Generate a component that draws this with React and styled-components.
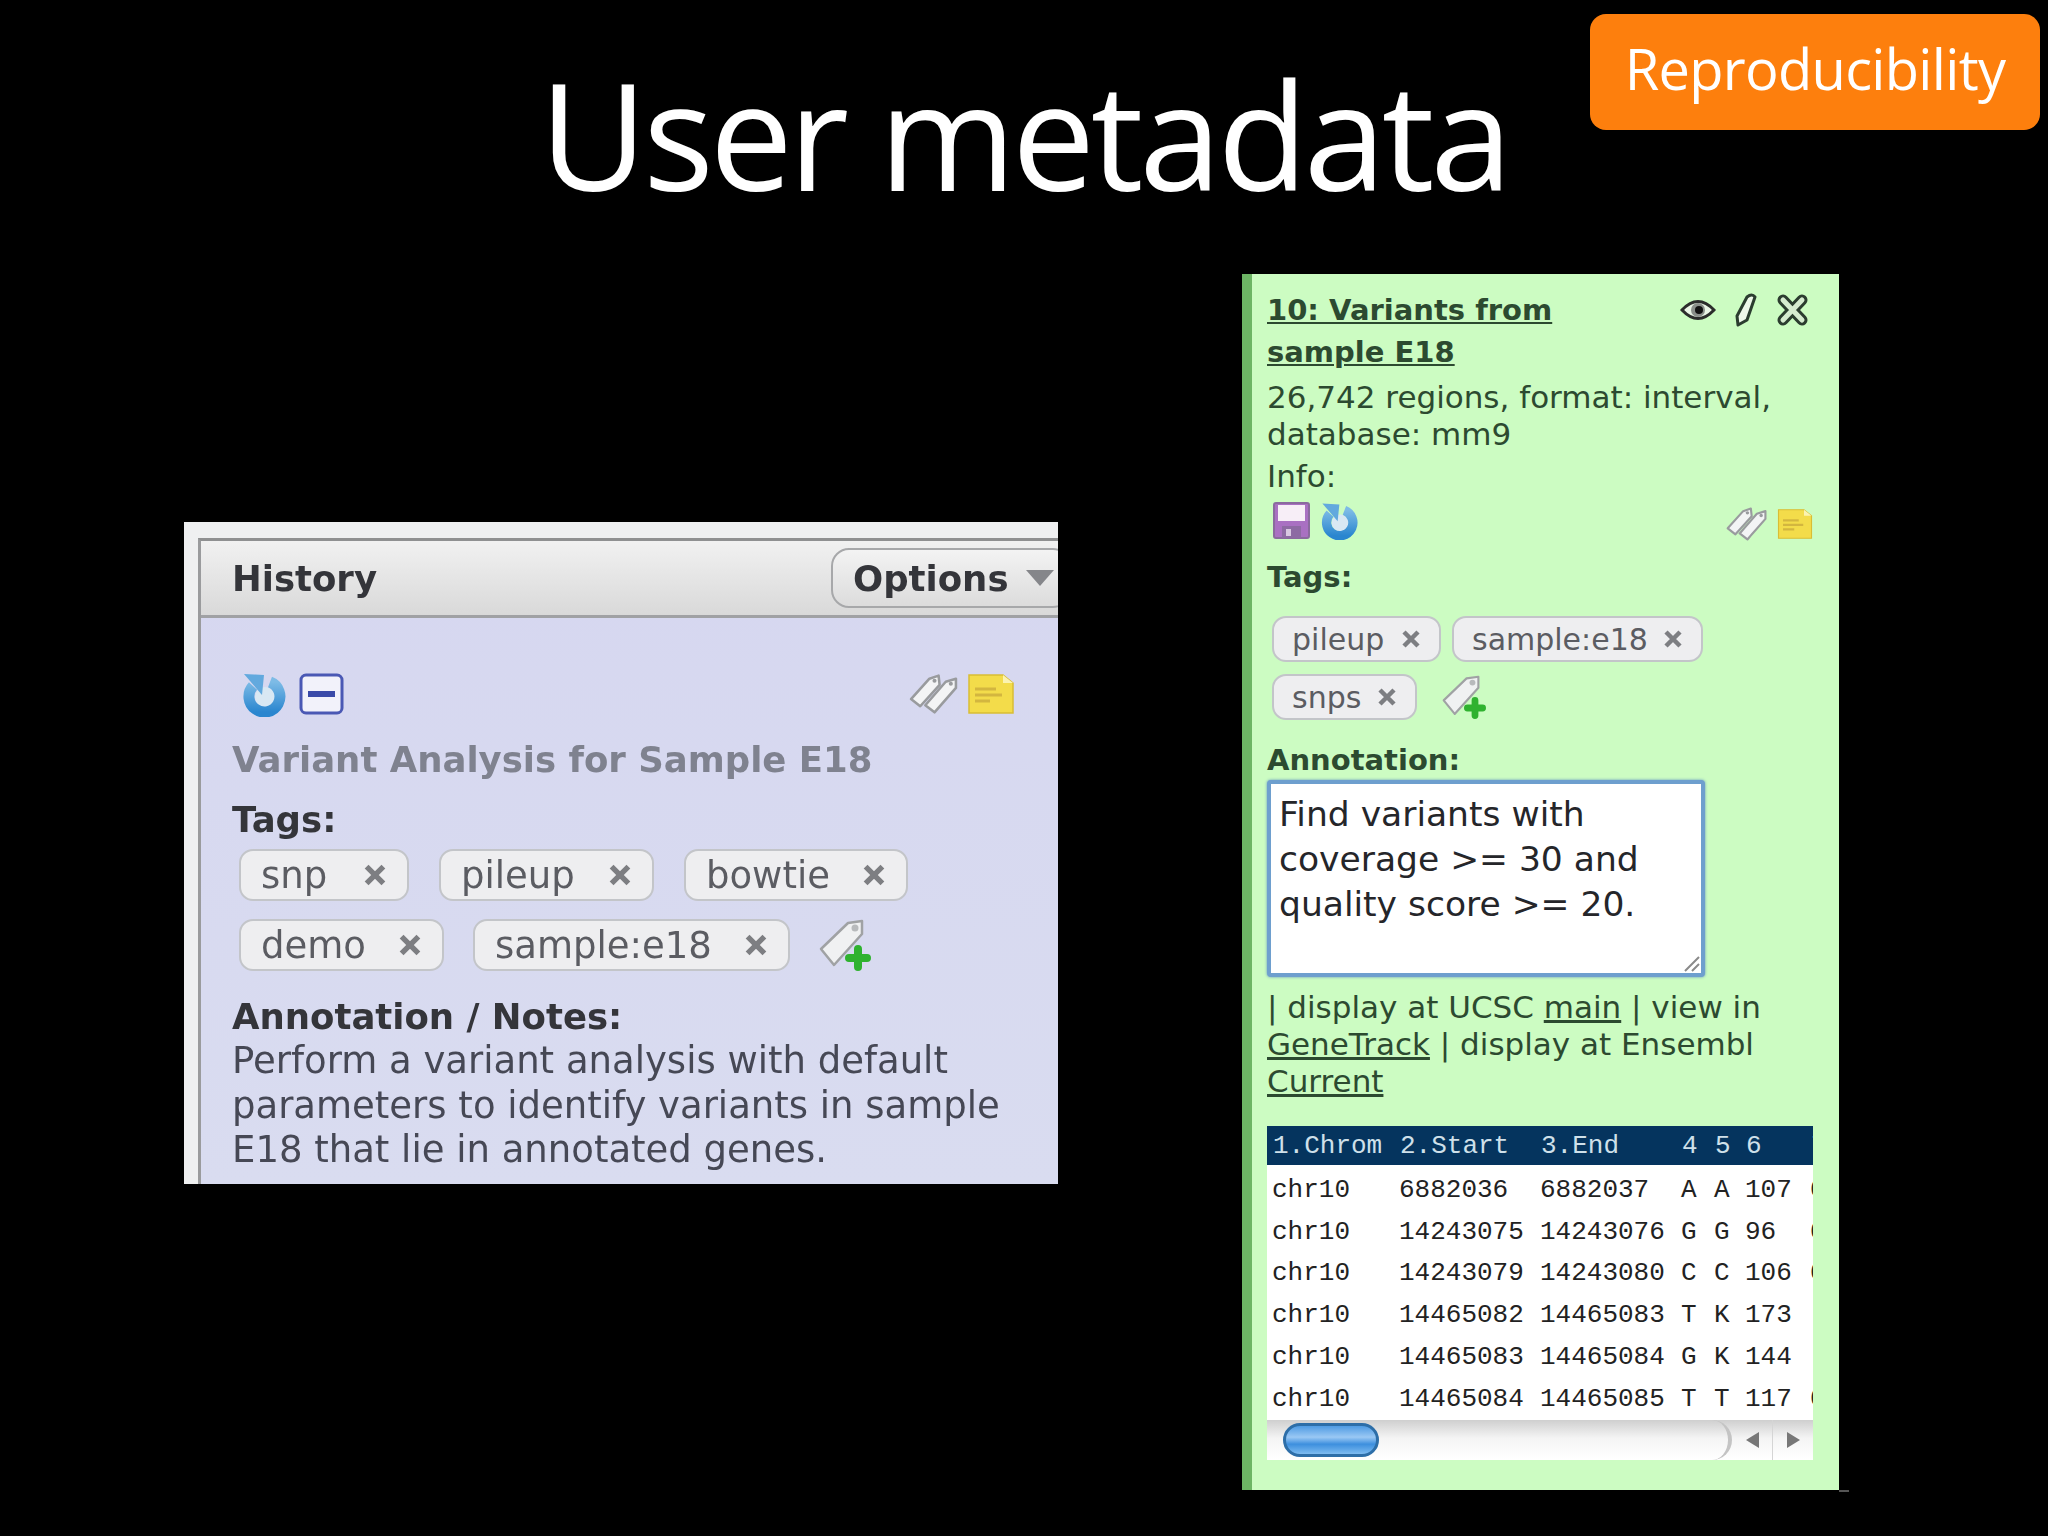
import React from 'react'
import styled, { createGlobalStyle } from 'styled-components'

const GlobalStyle = createGlobalStyle`
  html, body { margin: 0; padding: 0; background: #000; }
`

const Slide = styled.div`
  position: relative;
  width: 2048px;
  height: 1536px;
  background: #000;
  overflow: hidden;
`
const Header = styled.header`
  height: 274px;
  display: flex;
  justify-content: center;
  box-sizing: border-box;
`
const Title = styled.h1`
  margin: 39px 0 0;
  color: #fff;
  font-family: "Open Sans", sans-serif;
  font-weight: 400;
  font-size: 148px;
  letter-spacing: -4.2px;
  line-height: 190px;
  height: 190px;
`
const Badge = styled.div`
  position: absolute;
  left: 1590px;
  top: 14px;
  width: 450px;
  height: 116px;
  box-sizing: border-box;
  padding-bottom: 9px;
  border-radius: 16px;
  background: #fd7f0d;
  color: #fff;
  font-family: "Open Sans", sans-serif;
  font-size: 56px;
  letter-spacing: -0.7px;
  display: flex;
  align-items: center;
  justify-content: center;
`
const Content = styled.main`
  display: flex;
  align-items: flex-start;
  padding-left: 184px;
  gap: 184px;
`
const HistoryPanel = styled.section`
  width: 874px;
  height: 662px;
  margin-top: 248px;
  box-sizing: border-box;
  padding: 16px 0 0 14px;
  background: #eff0f1;
  overflow: hidden;
  filter: blur(0.7px);
  font-family: "DejaVu Sans", sans-serif;
`
const HistoryInner = styled.div`
  height: 100%;
  background: linear-gradient(#d6d7f0, #d9dcf0);
  border-left: 3px solid #9a9b9d;
  border-top: 3px solid #8f9091;
`
const HistoryHead = styled.div`
  height: 77px;
  box-sizing: border-box;
  display: flex;
  align-items: center;
  justify-content: space-between;
  padding-left: 31px;
  background: linear-gradient(#f1f1f1, #d9d9d9);
  border-bottom: 3px solid #a0a1a4;
`
const HistoryName = styled.div`
  color: #34353a;
  font-size: 35.5px;
  font-weight: 700;
`
const OptionsButton = styled.div`
  width: 240px;
  height: 60px;
  box-sizing: border-box;
  margin-right: -13px;
  padding-left: 20px;
  display: flex;
  align-items: center;
  gap: 17px;
  border: 2px solid #a7a8aa;
  border-radius: 18px;
  background: linear-gradient(#f3f3f3, #dcdcdc);
  color: #34353a;
  font-size: 35.5px;
  font-weight: 700;
`
const Caret = styled.span`
  width: 0;
  height: 0;
  border-left: 14px solid transparent;
  border-right: 14px solid transparent;
  border-top: 16px solid #85868a;
`
const HistoryBody = styled.div`
  padding: 53px 44px 0 31px;
  color: #3f414c;
`
const IconRow = styled.div`
  display: flex;
  align-items: center;
  justify-content: space-between;
  margin-top: ${p => p.$top || 0}px;
  padding-left: ${p => p.$indent || 0}px;
`
const IconGroup = styled.div`
  display: flex;
  align-items: center;
  gap: ${p => p.$gap || 0}px;
  margin-top: ${p => p.$drop || 0}px;
`
const DatasetName = styled.div`
  margin-top: 21px;
  color: #7f828f;
  font-size: 35.5px;
  font-weight: 700;
  line-height: 44px;
`
const Label = styled.div`
  margin-top: ${p => p.$top || 0}px;
  color: ${p => p.$color || '#34353a'};
  font-size: ${p => p.$size || 35.5}px;
  font-weight: 700;
  line-height: ${p => p.$lh || 44}px;
`
const ChipRow = styled.div`
  display: flex;
  align-items: center;
  gap: ${p => p.$gap}px;
  margin-top: ${p => p.$top || 0}px;
  padding-left: ${p => p.$indent || 0}px;
`
const Chip = styled.div`
  width: ${p => p.$w}px;
  height: ${p => p.$h}px;
  box-sizing: border-box;
  display: flex;
  align-items: center;
  justify-content: space-between;
  padding: 0 ${p => p.$pad}px;
  border: 2px solid #c3c5c9;
  border-radius: 14px;
  background: #eeeef0;
  color: #5b5c62;
  font-size: ${p => p.$size}px;
`
const ChipClose = styled.svg`
  width: ${p => p.$s}px;
  height: ${p => p.$s}px;
  flex: none;
`
const Notes = styled.div`
  font-size: 37px;
  line-height: 44.5px;
  color: #464855;
  white-space: nowrap;
`

const DatasetPanel = styled.section`
  position: relative;
  width: 597px;
  height: 1216px;
  box-sizing: border-box;
  padding: 15px 25px 0 15px;
  background: #ccfcc2;
  border-left: 10px solid #6db565;
  font-family: "DejaVu Sans", sans-serif;
  color: #2c4a30;
  filter: blur(0.7px);
  &::after {
    content: "";
    position: absolute;
    right: -10px;
    bottom: -2px;
    width: 10px;
    height: 2px;
    background: #555;
  }
`
const DatasetHead = styled.div`
  display: flex;
  justify-content: space-between;
  align-items: flex-start;
`
const DatasetTitle = styled.a`
  color: #2c4a30;
  font-size: 29px;
  font-weight: 700;
  line-height: 42px;
  text-decoration: underline;
  white-space: nowrap;
`
const Actions = styled.div`
  display: flex;
  align-items: center;
  gap: 18px;
  padding-top: 4px;
  padding-right: 5px;
`
const Meta = styled.div`
  margin-top: ${p => p.$top || 0}px;
  font-size: 31px;
  line-height: 37px;
  white-space: nowrap;
`
const TextBox = styled.div`
  position: relative;
  width: 438px;
  height: 197px;
  box-sizing: border-box;
  margin-top: 1px;
  padding: 8px 8px;
  background: #fff;
  border: 4px solid #6e9fce;
  border-radius: 4px;
  box-shadow: 0 0 3px #5f92c4;
  color: #25262a;
  font-size: 34.5px;
  line-height: 45px;
  white-space: nowrap;
`
const Grip = styled.svg`
  position: absolute;
  right: 0;
  bottom: 0;
  width: 22px;
  height: 22px;
`
const Link = styled.span`
  text-decoration: underline;
`
const DataTable = styled.div`
  width: 546px;
  margin-top: 26px;
  overflow: hidden;
  font-family: "Liberation Mono", monospace;
  font-size: 26px;
  background: #fff;
`
const TableRow = styled.div`
  display: grid;
  grid-template-columns: 127px 141px 141px 33px 31px 65px 30px;
  align-items: center;
  height: ${p => (p.$head ? 39 : 41.8)}px;
  margin-bottom: ${p => (p.$head ? 4 : 0)}px;
  padding-left: ${p => (p.$head ? 6 : 5)}px;
  background: ${p => (p.$head ? '#05345e' : '#fff')};
  color: ${p => (p.$head ? '#cfe0ea' : '#222')};
  white-space: nowrap;
  span { display: block; overflow: visible; }
`
const ScrollBar = styled.div`
  width: 546px;
  height: 40px;
  display: flex;
  align-items: center;
  background: linear-gradient(#cfcfcf, #f4f4f4 45%, #fff);
`
const Track = styled.div`
  flex: 1;
  height: 100%;
  padding-left: 16px;
  display: flex;
  align-items: center;
  border-right: 4px solid #c4c4c4;
  border-radius: 0 20px 20px 0;
`
const Thumb = styled.div`
  width: 96px;
  height: 34px;
  box-sizing: border-box;
  border: 3px solid #2d6ea8;
  border-radius: 17px;
  background: linear-gradient(#4f9be3, #9ac8f4 40%, #3d8fde 65%, #7dbbf0);
`
const ArrowBox = styled.div`
  width: 40px;
  height: 100%;
  display: flex;
  align-items: center;
  justify-content: center;
  border-left: ${p => (p.$divider ? '1px solid #d5d5d5' : 'none')};
`
const Arrow = styled.span`
  width: 0;
  height: 0;
  border-top: 8px solid transparent;
  border-bottom: 8px solid transparent;
  ${p => (p.$left ? 'border-right: 13px solid #777;' : 'border-left: 13px solid #777;')}
`

const RefreshIcon = ({ size, id }) => (
  <svg width={size} height={size} viewBox="0 0 46 46">
    <defs>
      <linearGradient id={id} x1="0" y1="0" x2="0" y2="1">
        <stop offset="0" stopColor="#7dbbe6" />
        <stop offset="1" stopColor="#2a86cf" />
      </linearGradient>
    </defs>
    <circle cx="25" cy="26" r="10" fill="#d9e8f3" />
    <path d="M30 11 A15.5 15.5 0 1 1 13 15" fill="none" stroke={`url(#${id})`} strokeWidth="11" />
    <path d="M4 3 L24 4 L22 24 Z" fill="#62a9de" />
  </svg>
)

const MinusBoxIcon = () => (
  <svg width="45" height="42" viewBox="0 0 45 42">
    <rect x="2" y="2" width="41" height="38" rx="5" fill="#f2f2fa" stroke="#4a58b4" strokeWidth="3" />
    <rect x="9" y="18" width="27" height="6" fill="#3a4aa8" />
  </svg>
)

const TagsIcon = ({ width, height }) => (
  <svg width={width} height={height} viewBox="0 0 49 40">
    <path d="M2 25 L20 5 L29 2 L30 11 L11 32 Z" fill="#f3f4f5" stroke="#999b9e" strokeWidth="2.5" strokeLinejoin="round" />
    <path d="M16 31 L36 8 L46 5 L46 14 L25 38 Z" fill="#f3f4f5" stroke="#999b9e" strokeWidth="2.5" strokeLinejoin="round" />
    <circle cx="25" cy="7" r="2" fill="#999b9e" />
    <circle cx="41" cy="10" r="2" fill="#999b9e" />
  </svg>
)

const NoteIcon = ({ width, height }) => (
  <svg width={width} height={height} viewBox="0 0 46 40">
    <path d="M1 1 H35 L45 9 V39 H1 Z" fill="#f3dc4a" stroke="#d9bd35" strokeWidth="1.5" />
    <path d="M35 1 V9 H45 Z" fill="#fbf3b0" />
    <path d="M7 15 H28 M7 21 H34 M7 27 H22" stroke="#d3b63f" strokeWidth="3" />
  </svg>
)

const AddTagIcon = ({ width, height }) => (
  <svg width={width} height={height} viewBox="0 0 52 52">
    <path d="M2 30 L29 4 L43 2 L43 15 L15 46 Z" fill="#f0f1f2" stroke="#a0a2a4" strokeWidth="2.5" strokeLinejoin="round" />
    <circle cx="36" cy="9" r="3.5" fill="#b8babc" />
    <path d="M30 39 H48 M39 30 V48" stroke="#2fb22f" strokeWidth="8" strokeLinecap="round" />
  </svg>
)

const EyeIcon = () => (
  <svg width="36" height="26" viewBox="0 0 36 26">
    <path d="M2 13 Q18 -4 34 13 Q18 30 2 13 Z" fill="#eaf5e6" stroke="#2b2d2b" strokeWidth="3" />
    <circle cx="18" cy="13" r="7" fill="#8a8f8a" />
    <circle cx="19" cy="13" r="4" fill="#111" />
  </svg>
)

const PencilIcon = () => (
  <svg width="24" height="34" viewBox="0 0 24 34">
    <path d="M3 23 L13 4 Q18 0 21 4 L13 27 L4 32 Z" fill="#eef8ea" stroke="#2b3d2f" strokeWidth="3" strokeLinejoin="round" />
  </svg>
)

const CloseIcon = () => (
  <svg width="33" height="32" viewBox="0 0 33 32">
    <path d="M7 6 L26 26 M26 6 L7 26" stroke="#2b3d2f" strokeWidth="11" strokeLinecap="round" />
    <path d="M7 6 L26 26 M26 6 L7 26" stroke="#d6ecd0" strokeWidth="5" strokeLinecap="round" />
  </svg>
)

const DiskIcon = () => (
  <svg width="37" height="37" viewBox="0 0 37 37">
    <rect x="1" y="1" width="35" height="35" rx="2" fill="#a970c2" stroke="#8a6a9e" strokeWidth="2" />
    <rect x="5" y="3" width="27" height="16" fill="#f7eef7" />
    <rect x="9" y="24" width="19" height="12" fill="#8d6aa3" />
    <rect x="13" y="27" width="5" height="7" fill="#d9c8e2" />
  </svg>
)

const ChipX = ({ s }) => (
  <ChipClose $s={s} viewBox="0 0 20 20">
    <path d="M3 3 L17 17 M17 3 L3 17" stroke="#7d7e82" strokeWidth="4.5" />
  </ChipClose>
)

const rows = [
  ['chr10', '6882036', '6882037', 'A', 'A', '107', '0'],
  ['chr10', '14243075', '14243076', 'G', 'G', '96', '0'],
  ['chr10', '14243079', '14243080', 'C', 'C', '106', '0'],
  ['chr10', '14465082', '14465083', 'T', 'K', '173', ':'],
  ['chr10', '14465083', '14465084', 'G', 'K', '144', ':'],
  ['chr10', '14465084', '14465085', 'T', 'T', '117', '0'],
]
const headCols = ['1.Chrom', '2.Start', '3.End', '4', '5', '6', '7']

const LeftChip = ({ w, children }) => (
  <Chip $w={w} $h={52} $pad={20} $size={37}>
    {children}
    <ChipX s={24} />
  </Chip>
)

const RightChip = ({ w, children }) => (
  <Chip $w={w} $h={46} $pad={18} $size={30}>
    {children}
    <ChipX s={20} />
  </Chip>
)

export default function App() {
  return (
    <Slide>
      <GlobalStyle />
      <Header>
        <Title>User metadata</Title>
      </Header>
      <Badge>Reproducibility</Badge>
      <Content>
        <HistoryPanel>
          <HistoryInner>
            <HistoryHead>
              <HistoryName>History</HistoryName>
              <OptionsButton>
                Options
                <Caret />
              </OptionsButton>
            </HistoryHead>
            <HistoryBody>
              <IconRow $indent={8}>
                <IconGroup $gap={13}>
                  <RefreshIcon size={46} id="refresh-big" />
                  <MinusBoxIcon />
                </IconGroup>
                <IconGroup $gap={9}>
                  <TagsIcon width={50} height={44} />
                  <NoteIcon width={46} height={40} />
                </IconGroup>
              </IconRow>
              <DatasetName>Variant Analysis for Sample E18</DatasetName>
              <Label $top={16}>Tags:</Label>
              <ChipRow $gap={30} $top={7} $indent={7}>
                <LeftChip w={170}>snp</LeftChip>
                <LeftChip w={215}>pileup</LeftChip>
                <LeftChip w={224}>bowtie</LeftChip>
              </ChipRow>
              <ChipRow $gap={29} $top={18} $indent={7}>
                <LeftChip w={205}>demo</LeftChip>
                <LeftChip w={317}>sample:e18</LeftChip>
                <AddTagIcon width={52} height={52} />
              </ChipRow>
              <Label $top={24}>Annotation / Notes:</Label>
              <Notes>
                Perform a variant analysis with default
                <br />
                parameters to identify variants in sample
                <br />
                E18 that lie in annotated genes.
              </Notes>
            </HistoryBody>
          </HistoryInner>
        </HistoryPanel>

        <DatasetPanel>
          <DatasetHead>
            <DatasetTitle>
              10: Variants from
              <br />
              sample E18
            </DatasetTitle>
            <Actions>
              <EyeIcon />
              <PencilIcon />
              <CloseIcon />
            </Actions>
          </DatasetHead>
          <Meta $top={6}>
            26,742 regions, format: interval,
            <br />
            database: mm9
          </Meta>
          <Meta $top={5}>Info:</Meta>
          <IconRow $indent={6} $top={3}>
            <IconGroup $gap={9}>
              <DiskIcon />
              <RefreshIcon size={39} id="refresh-small" />
            </IconGroup>
            <IconGroup $gap={8} $drop={8}>
              <TagsIcon width={42} height={36} />
              <NoteIcon width={38} height={30} />
            </IconGroup>
          </IconRow>
          <Label $top={17} $size={29} $lh={37} $color="#2c4a30">Tags:</Label>
          <ChipRow $gap={11} $top={20} $indent={5}>
            <RightChip w={169}>pileup</RightChip>
            <RightChip w={251}>sample:e18</RightChip>
          </ChipRow>
          <ChipRow $gap={25} $top={12} $indent={5}>
            <RightChip w={145}>snps</RightChip>
            <AddTagIcon width={44} height={44} />
          </ChipRow>
          <Label $top={22} $size={29} $lh={37} $color="#2c4a30">Annotation:</Label>
          <TextBox>
            Find variants with
            <br />
            coverage &gt;= 30 and
            <br />
            quality score &gt;= 20.
            <Grip viewBox="0 0 22 22">
              <path d="M6 20 L20 6 M13 20 L20 13" stroke="#8a8a8a" strokeWidth="2" />
            </Grip>
          </TextBox>
          <Meta $top={12}>
            | display at UCSC <Link>main</Link> | view in
            <br />
            <Link>GeneTrack</Link> | display at Ensembl
            <br />
            <Link>Current</Link>
          </Meta>
          <DataTable>
            <TableRow $head>
              {headCols.map(c => (
                <span key={c}>{c}</span>
              ))}
            </TableRow>
            {rows.map(r => (
              <TableRow key={r[1]}>
                {r.map((c, i) => (
                  <span key={i}>{c}</span>
                ))}
              </TableRow>
            ))}
          </DataTable>
          <ScrollBar>
            <Track>
              <Thumb />
            </Track>
            <ArrowBox>
              <Arrow $left />
            </ArrowBox>
            <ArrowBox $divider>
              <Arrow />
            </ArrowBox>
          </ScrollBar>
        </DatasetPanel>
      </Content>
    </Slide>
  )
}
